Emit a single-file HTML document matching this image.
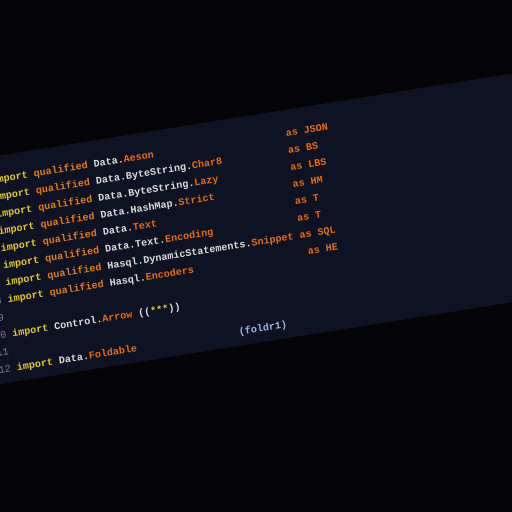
<!DOCTYPE html>
<html><head><style>
html,body{margin:0;padding:0;width:512px;height:512px;overflow:hidden;background:#040406;}
.wrap{position:absolute;left:0;top:0;width:0;height:0;transform-origin:0 0;transform:matrix(1,-0.16,0.135,1,-39.4,178);}
.panel{position:absolute;left:-300px;top:-16px;width:1000px;height:224px;background:#0e1222;}
.code{position:absolute;left:0;top:0;font-family:"Liberation Mono","DejaVu Sans Mono",monospace;font-weight:bold;font-size:10px;line-height:17px;white-space:pre;color:#d6d6d6;}
.n{display:inline-block;width:24px;text-align:right;color:#7c7c84;margin-right:6px;font-weight:normal;}
.k{color:#e2c43a;}
.q{color:#e07a22;}
.m{color:#dadada;}
.o{color:#e06c1a;}
.b{color:#9fb3e0;}
</style></head><body>
<div class="wrap"><div class="panel"></div><div class="code"><div><span class="n">1</span><span class="k">import</span> <span class="q">qualified</span> <span class="m">Data.</span><span class="o">Aeson</span>                      <span class="o">as JSON</span></div><div><span class="n">2</span><span class="k">import</span> <span class="q">qualified</span> <span class="m">Data.ByteString.</span><span class="o">Char8</span>           <span class="o">as BS</span></div><div><span class="n">3</span><span class="k">import</span> <span class="q">qualified</span> <span class="m">Data.ByteString.</span><span class="o">Lazy</span>            <span class="o">as LBS</span></div><div><span class="n">4</span><span class="k">import</span> <span class="q">qualified</span> <span class="m">Data.HashMap.</span><span class="o">Strict</span>             <span class="o">as HM</span></div><div><span class="n">5</span><span class="k">import</span> <span class="q">qualified</span> <span class="m">Data.</span><span class="o">Text</span>                       <span class="o">as T</span></div><div><span class="n">6</span><span class="k">import</span> <span class="q">qualified</span> <span class="m">Data.Text.</span><span class="o">Encoding</span>              <span class="o">as T</span></div><div><span class="n">7</span><span class="k">import</span> <span class="q">qualified</span> <span class="m">Hasql.DynamicStatements.</span><span class="o">Snippet</span> <span class="o">as SQL</span></div><div><span class="n">8</span><span class="k">import</span> <span class="q">qualified</span> <span class="m">Hasql.</span><span class="o">Encoders</span>                   <span class="o">as HE</span></div><div><span class="n">9</span></div><div><span class="n">10</span><span class="k">import</span> <span class="m">Control.</span><span class="o">Arrow</span> <span class="m">((</span><span class="k">***</span><span class="m">))</span></div><div><span class="n">11</span></div><div><span class="n">12</span><span class="k">import</span> <span class="m">Data.</span><span class="o">Foldable</span>                 <span class="b">(foldr1)</span></div></div></div>
</body></html>
